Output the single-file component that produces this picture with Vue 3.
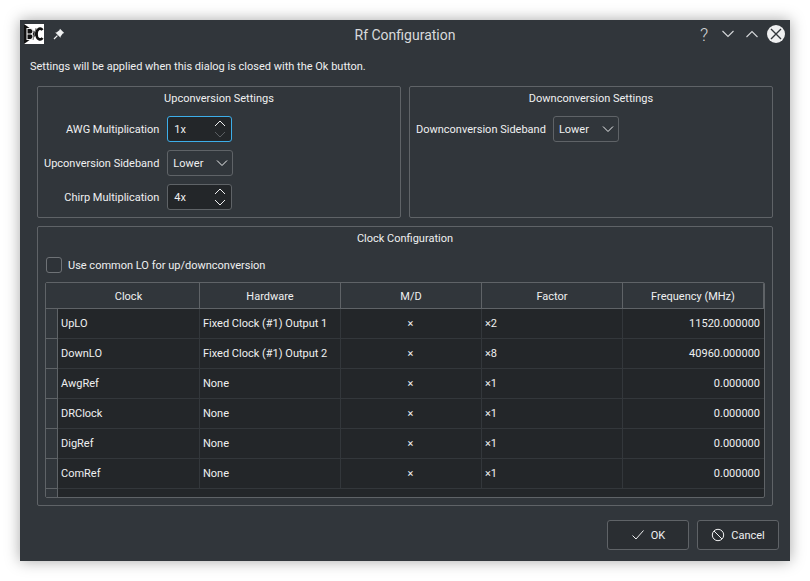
<template>
  <div class="desktop">
    <div class="dialog">
      <!-- Title bar -->
      <div class="titlebar">
        <div class="title-left">
          <svg class="app-logo" width="20" height="20" viewBox="0 0 20 20">
            <rect width="20" height="20" fill="#fff" />
            <path d="M0 0 L14 10 L0 20 Z" fill="#111" />
            <path d="M3 4.5 V15.5 H6.5 Q9 15.5 9 12.7 Q9 10 6.8 10 Q9 10 9 7.3 Q9 4.5 6.5 4.5 Z M3 10 H6.8" fill="none" stroke="#eee" stroke-width="1.1" />
            <path d="M9 16 L12 4" stroke="#777" stroke-width="1" />
            <path d="M18.5 6 Q17 4 15 4.8 Q12.5 6 12.5 10 Q12.5 14 15 15.2 Q17 16 18.5 14" fill="none" stroke="#111" stroke-width="2.6" />
          </svg>
          <svg class="pin" width="12" height="12" viewBox="0 0 12 12">
            <path d="M7 0.8 L11.2 5 L9.8 5.6 L7.6 8.6 L7.6 9.8 L2.2 4.4 L3.4 4.4 L6.4 2.2 Z" fill="#eff0f1" />
            <path d="M4.4 7.6 L1 11" stroke="#eff0f1" stroke-width="1.2" />
          </svg>
        </div>
        <div class="title">Rf Configuration</div>
        <div class="title-right">
          <span class="help">?</span>
          <svg width="14" height="14" viewBox="0 0 14 14"><path d="M1.5 4 L7 9.5 L12.5 4" fill="none" stroke="#d5d7d9" stroke-width="1.1" /></svg>
          <svg width="14" height="14" viewBox="0 0 14 14"><path d="M1.5 10 L7 4.5 L12.5 10" fill="none" stroke="#d5d7d9" stroke-width="1.1" /></svg>
          <span class="close">
            <svg width="18" height="18" viewBox="0 0 18 18"><path d="M4 4 L14 14 M14 4 L4 14" stroke="#31363b" stroke-width="1.4" /></svg>
          </span>
        </div>
      </div>

      <div class="body">
        <p class="note">Settings will be applied when this dialog is closed with the Ok button.</p>

        <div class="groups">
          <section class="group up">
            <h3>Upconversion Settings</h3>
            <div class="form">
              <label>AWG Multiplication</label>
              <div class="spin focus">
                <span>1x</span>
                <svg width="14" height="22" viewBox="0 0 14 22">
                  <path d="M2 8 L7 3 L12 8" fill="none" stroke="#eff0f1" stroke-width="1" />
                  <path d="M2 14 L7 19 L12 14" fill="none" stroke="#5a5e62" stroke-width="1" />
                </svg>
              </div>
              <label>Upconversion Sideband</label>
              <div class="combo">
                <span>Lower</span>
                <svg width="12" height="8" viewBox="0 0 12 8"><path d="M1 1.5 L6 6.5 L11 1.5" fill="none" stroke="#eff0f1" stroke-width="1" /></svg>
              </div>
              <label>Chirp Multiplication</label>
              <div class="spin">
                <span>4x</span>
                <svg width="14" height="22" viewBox="0 0 14 22">
                  <path d="M2 8 L7 3 L12 8" fill="none" stroke="#eff0f1" stroke-width="1" />
                  <path d="M2 14 L7 19 L12 14" fill="none" stroke="#eff0f1" stroke-width="1" />
                </svg>
              </div>
            </div>
          </section>

          <section class="group down">
            <h3>Downconversion Settings</h3>
            <div class="form tight">
              <label>Downconversion Sideband</label>
              <div class="combo">
                <span>Lower</span>
                <svg width="12" height="8" viewBox="0 0 12 8"><path d="M1 1.5 L6 6.5 L11 1.5" fill="none" stroke="#eff0f1" stroke-width="1" /></svg>
              </div>
            </div>
          </section>
        </div>

        <section class="group clock">
          <h3>Clock Configuration</h3>
          <div class="check-row">
            <span class="check"></span>
            <span>Use common LO for up/downconversion</span>
          </div>

          <div class="table">
            <div class="thead">
              <div class="corner"></div>
              <div v-for="col in columns" :key="col" class="th">{{ col }}</div>
            </div>
            <div class="tbody">
              <div class="vhead">
                <div v-for="row in clocks" :key="row.name" class="vh"></div>
                <div class="vh rest"></div>
              </div>
              <div class="rows">
                <div v-for="row in clocks" :key="row.name" class="tr">
                  <div class="td">{{ row.name }}</div>
                  <div class="td">{{ row.hw }}</div>
                  <div class="td center">×</div>
                  <div class="td">{{ row.factor }}</div>
                  <div class="td right">{{ row.freq }}</div>
                </div>
              </div>
            </div>
          </div>
        </section>

        <div class="buttons">
          <button class="btn">
            <svg width="14" height="14" viewBox="0 0 14 14"><path d="M1.5 7.5 L5 11 L12.5 2.5" fill="none" stroke="#eff0f1" stroke-width="1" /></svg>
            OK
          </button>
          <button class="btn">
            <svg width="14" height="14" viewBox="0 0 14 14">
              <circle cx="7" cy="7" r="5.7" fill="none" stroke="#eff0f1" stroke-width="1" />
              <path d="M3 3 L11 11" stroke="#eff0f1" stroke-width="1" />
            </svg>
            Cancel
          </button>
        </div>
      </div>
    </div>
  </div>
</template>

<script setup>
const columns = ['Clock', 'Hardware', 'M/D', 'Factor', 'Frequency (MHz)']

const clocks = [
  { name: 'UpLO', hw: 'Fixed Clock (#1) Output 1', factor: '×2', freq: '11520.000000' },
  { name: 'DownLO', hw: 'Fixed Clock (#1) Output 2', factor: '×8', freq: '40960.000000' },
  { name: 'AwgRef', hw: 'None', factor: '×1', freq: '0.000000' },
  { name: 'DRClock', hw: 'None', factor: '×1', freq: '0.000000' },
  { name: 'DigRef', hw: 'None', factor: '×1', freq: '0.000000' },
  { name: 'ComRef', hw: 'None', factor: '×1', freq: '0.000000' }
]
</script>

<style>
html, body {
  margin: 0;
  background: #fff;
}
</style>

<style scoped>
.desktop {
  height: 581px;
  padding: 20px;
  box-sizing: border-box;
  font-family: Roboto, "Noto Sans", sans-serif;
  font-size: 11px;
  color: #eff0f1;
}

.dialog {
  width: 770px;
  height: 541px;
  background: #31363b;
  box-shadow: 0 0 14px rgba(0, 0, 0, 0.35);
  display: flex;
  flex-direction: column;
}

.titlebar {
  height: 28px;
  flex: none;
  display: flex;
  align-items: center;
  position: relative;
  padding: 0 5px 0 4px;
}

.title-left {
  display: flex;
  align-items: center;
  gap: 9px;
}

.app-logo {
  display: block;
}

.title {
  position: absolute;
  left: 0;
  right: 0;
  margin-top: 2px;
  text-align: center;
  font-size: 14px;
  color: #d8dadc;
}

.title-right {
  margin-left: auto;
  display: flex;
  align-items: center;
  gap: 10px;
  position: relative;
}

.help {
  font-size: 18px;
  font-weight: 300;
  color: #d5d7d9;
  width: 14px;
  text-align: center;
}

.close {
  width: 18px;
  height: 18px;
  margin-left: -2px;
  border-radius: 50%;
  background: #eff0f1;
  display: block;
}

.close svg {
  display: block;
}

.body {
  flex: 1;
  display: flex;
  flex-direction: column;
  padding: 0 11px 11px 10px;
}

.note {
  margin: 12px 0 12px;
  line-height: 14px;
}

.groups {
  display: grid;
  grid-template-columns: 364px 364px;
  gap: 8px;
  margin: 0 7px 8px;
}

.group {
  border: 1px solid #5f6367;
  border-radius: 2px;
  box-sizing: border-box;
}

.group h3 {
  margin: 0;
  font-size: 11px;
  font-weight: 400;
  text-align: center;
  line-height: 14px;
  padding-top: 5px;
}

.up,
.down {
  height: 132px;
}

.form {
  display: grid;
  grid-template-columns: max-content max-content;
  justify-content: start;
  align-items: center;
  column-gap: 8px;
  row-gap: 8px;
  padding: 10px 0 0 6px;
}

.form.tight {
  column-gap: 7px;
}

.form label {
  text-align: right;
}

.spin,
.combo {
  height: 26px;
  box-sizing: border-box;
  border: 1px solid #5f6367;
  border-radius: 3px;
  display: flex;
  align-items: center;
  justify-content: space-between;
}

.spin {
  width: 65px;
  background: #232629;
  padding: 0 4px 0 6px;
}

.spin.focus {
  border-color: #3daee9;
}

.combo {
  width: 66px;
  background: #31363b;
  padding: 0 4px 0 5px;
}

.clock {
  margin: 0 6px 0 7px;
  height: 280px;
}

.check-row {
  display: flex;
  align-items: center;
  gap: 6px;
  padding: 11px 0 0 8px;
  height: 16px;
}

.check {
  width: 16px;
  height: 16px;
  box-sizing: border-box;
  border: 1px solid #6e7276;
  border-radius: 3px;
  background: #2e3338;
}

.table {
  margin: 9px 7px 0 7px;
  height: 216px;
  box-sizing: border-box;
  border: 1px solid #5f6367;
  border-radius: 2px;
  background: #232629;
  display: flex;
  flex-direction: column;
  overflow: hidden;
}

.thead {
  display: grid;
  grid-template-columns: 11px 142px 141px 141px 141px 142px;
  height: 26px;
  box-sizing: border-box;
  flex: none;
  background: #31363b;
  border-bottom: 1px solid #5f6367;
}

.th {
  display: flex;
  align-items: center;
  justify-content: center;
  padding-top: 1px;
  border-left: 1px solid #5f6367;
}

.th:nth-child(2) {
  border-left: none;
  padding-left: 1px;
}

.th:last-child {
  border-right: 1px solid #5f6367;
}

.tbody {
  flex: 1;
  display: flex;
  min-height: 0;
}

.vhead {
  width: 12px;
  box-sizing: border-box;
  flex: none;
  background: #31363b;
  border-right: 1px solid #5f6367;
  display: flex;
  flex-direction: column;
}

.vh {
  height: 30px;
  flex: none;
  box-sizing: border-box;
  border-bottom: 1px solid #5f6367;
}

.vh.rest {
  flex: 1;
  height: auto;
  border-bottom: none;
}

.rows {
  flex: 1;
}

.tr {
  display: grid;
  grid-template-columns: 142px 141px 141px 141px 141px;
  height: 30px;
  box-sizing: border-box;
  border-bottom: 1px solid #33373b;
}

.td {
  display: flex;
  align-items: center;
  padding: 0 4px 0 3px;
  border-right: 1px solid #33373b;
  white-space: nowrap;
}

.td.center {
  justify-content: center;
}

.td.right {
  justify-content: flex-end;
  border-right: none;
}

.buttons {
  margin-top: auto;
  display: flex;
  justify-content: flex-end;
  gap: 8px;
}

.btn {
  width: 82px;
  height: 30px;
  background: #2a2e32;
  border: 1px solid #5f6367;
  border-radius: 3px;
  color: #eff0f1;
  font: inherit;
  display: flex;
  align-items: center;
  justify-content: center;
  gap: 6px;
  padding: 0;
}
</style>
